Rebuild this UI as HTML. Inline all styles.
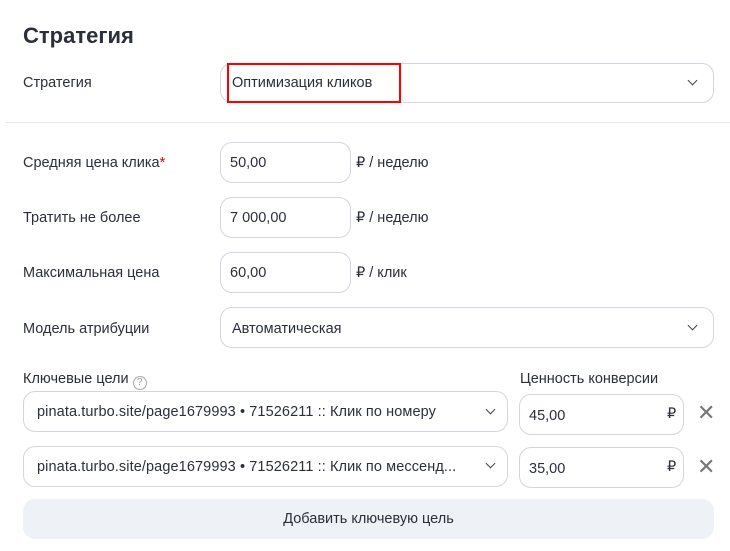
<!DOCTYPE html>
<html><head><meta charset="utf-8"><style>
*{box-sizing:border-box;margin:0;padding:0}
body{width:730px;height:551px;background:#fff;font-family:"Liberation Sans",sans-serif;color:#2b2f3a;position:relative;overflow:hidden;font-size:14.5px}
.a{position:absolute}
.box{position:absolute;border:1px solid #d3d6df;border-radius:12px;background:#fff}
.lbl{position:absolute;left:23px;font-size:14.5px}
.chev{position:absolute;width:7px;height:7px;border-right:1.2px solid #444;border-bottom:1.2px solid #444;transform:rotate(45deg)}
.x{position:absolute;font-size:22px;color:#777;font-weight:300}
</style></head><body>
<div class="a" style="left:23px;top:23px;font-size:22px;font-weight:bold">Стратегия</div>

<div class="lbl" style="top:75px">Стратегия</div>
<div class="box" style="left:220px;top:63px;width:494px;height:40px"></div>
<div class="a" style="left:227px;top:63px;width:174px;height:40px;border:2px solid #f00"></div>
<div class="a" style="left:232px;top:75px">Оптимизация кликов</div>
<div class="chev" style="left:689px;top:77px"></div>
<div class="a" style="left:5px;top:122px;width:725px;height:1px;background:#e6e8ef"></div>

<div class="lbl" style="top:155px">Средняя цена клика<span style="color:#e00">*</span></div>
<div class="box" style="left:220px;top:142px;width:131px;height:41px"></div>
<div class="a" style="left:230px;top:155px">50,00</div>
<div class="a" style="left:356px;top:155px">₽ / неделю</div>

<div class="lbl" style="top:210px">Тратить не более</div>
<div class="box" style="left:220px;top:197px;width:131px;height:41px"></div>
<div class="a" style="left:230px;top:210px">7 000,00</div>
<div class="a" style="left:356px;top:210px">₽ / неделю</div>

<div class="lbl" style="top:265px">Максимальная цена</div>
<div class="box" style="left:220px;top:252px;width:131px;height:41px"></div>
<div class="a" style="left:230px;top:265px">60,00</div>
<div class="a" style="left:356px;top:265px">₽ / клик</div>

<div class="lbl" style="top:321px">Модель атрибуции</div>
<div class="box" style="left:220px;top:307px;width:494px;height:41px"></div>
<div class="a" style="left:232px;top:321px">Автоматическая</div>
<div class="chev" style="left:689px;top:322px"></div>

<div class="lbl" style="top:371px">Ключевые цели <span style="display:inline-block;width:14px;height:14px;border:1px solid #aaa;border-radius:50%;font-size:10px;color:#999;text-align:center;line-height:12px;vertical-align:-2px">?</span></div>
<div class="a" style="left:520px;top:371px">Ценность конверсии</div>

<div class="box" style="left:23px;top:391px;width:485px;height:41px"></div>
<div class="a" style="left:37px;top:404px;letter-spacing:0.1px">pinata.turbo.site/page1679993 • 71526211 :: Клик по номеру</div>
<div class="chev" style="left:487px;top:406px"></div>
<div class="box" style="left:519px;top:394px;width:165px;height:41px"></div>
<div class="a" style="left:529px;top:408px">45,00</div>
<div class="a" style="left:667px;top:406px">₽</div>
<div class="x" style="left:697px;top:400px">✕</div>

<div class="box" style="left:23px;top:446px;width:485px;height:41px"></div>
<div class="a" style="left:37px;top:459px;letter-spacing:0.1px">pinata.turbo.site/page1679993 • 71526211 :: Клик по мессенд...</div>
<div class="chev" style="left:487px;top:460px"></div>
<div class="box" style="left:519px;top:447px;width:165px;height:41px"></div>
<div class="a" style="left:529px;top:461px">35,00</div>
<div class="a" style="left:667px;top:459px">₽</div>
<div class="x" style="left:697px;top:454px">✕</div>

<div class="a" style="left:23px;top:499px;width:691px;height:40px;border-radius:12px;background:#eef1f6;text-align:center;line-height:41px">Добавить ключевую цель</div>
</body></html>
